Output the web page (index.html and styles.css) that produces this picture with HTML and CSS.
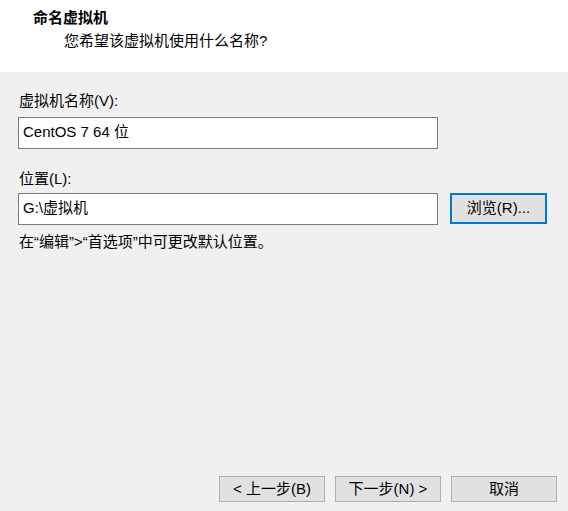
FILE: index.html
```html
<!DOCTYPE html>
<html lang="zh-CN">
<head>
<meta charset="utf-8">
<link rel="stylesheet" href="styles.css">
</head>
<body>
<div class="dialog">
  <div class="header">
    <div class="title">命名虚拟机</div>
    <div class="subtitle">您希望该虚拟机使用什么名称?</div>
  </div>
  <div class="main">
    <div class="label label-first">虚拟机名称(V):</div>
    <div class="field field-name"><span class="field-text">CentOS 7 64 位</span></div>
    <div class="label label-second">位置(L):</div>
    <div class="row">
      <div class="field field-path"><span class="field-text">G:\虚拟机</span></div>
      <div class="btn btn-browse">浏览(R)...</div>
    </div>
    <div class="hint">在“编辑”&gt;“首选项”中可更改默认位置。</div>
  </div>
  <div class="footer">
    <div class="btn btn-foot">&lt; 上一步(B)</div>
    <div class="btn btn-foot">下一步(N) &gt;</div>
    <div class="btn btn-foot">取消</div>
  </div>
</div>
</body>
</html>
```
FILE: styles.css
```css
html, body {
  margin: 0;
  padding: 0;
}
body {
  font-family: "Liberation Sans", "Noto Sans CJK SC", sans-serif;
  font-size: 15px;
  color: #000;
  background: #f0f0f0;
}
.dialog {
  width: 568px;
  height: 511px;
  display: flex;
  flex-direction: column;
  background: #f0f0f0;
}
.header {
  height: 72px;
  box-sizing: border-box;
  background: #ffffff;
  padding: 8px 0 0 33px;
}
.title {
  font-weight: bold;
  line-height: 20px;
}
.subtitle {
  line-height: 20px;
  margin-top: 3px;
  padding-left: 31px;
}
.main {
  display: flex;
  flex-direction: column;
  padding: 0 21px 0 18px;
}
.label {
  line-height: 20px;
  padding-left: 1px;
}
.label-first {
  margin-top: 19px;
}
.label-second {
  margin-top: 20px;
}
.field {
  box-sizing: border-box;
  height: 32px;
  border: 1px solid #7a7a7a;
  background: #ffffff;
  display: flex;
  align-items: center;
  padding: 0 4px 3px 4px;
}
.field-text {
  line-height: 20px;
}
.field-name {
  width: 420px;
  margin-top: 6px;
}
.row {
  display: flex;
  align-items: flex-start;
  gap: 12px;
  margin-top: 4px;
}
.field-path {
  width: 420px;
}
.btn {
  box-sizing: border-box;
  display: flex;
  align-items: center;
  justify-content: center;
  background: #e1e1e1;
  border: 1px solid #adadad;
  line-height: 20px;
}
.btn-browse {
  width: 97px;
  height: 31px;
  border: 2px solid #0078d7;
  padding-bottom: 1px;
}
.hint {
  line-height: 20px;
  margin-top: 7px;
  padding-left: 1px;
}
.footer {
  margin-top: auto;
  display: flex;
  justify-content: flex-end;
  gap: 10px;
  padding: 0 11px 9px 0;
}
.btn-foot {
  width: 106px;
  height: 26px;
  padding-bottom: 1px;
}
```
